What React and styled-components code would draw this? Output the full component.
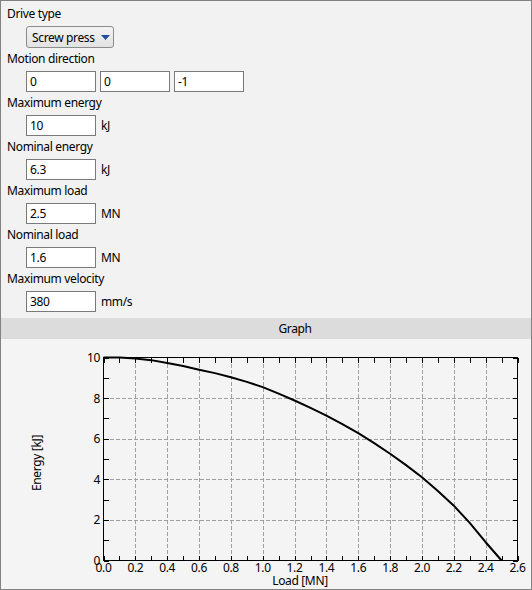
import styled, { createGlobalStyle } from "styled-components";

const GlobalStyle = createGlobalStyle`
  body {
    margin: 0;
    font-family: "Noto Sans", "Liberation Sans", sans-serif;
    font-size: 12px;
    letter-spacing: -0.35px;
    color: #000;
  }
`;

const Frame = styled.div`
  width: 532px;
  height: 590px;
  box-sizing: border-box;
  border: 1px solid #828282;
  background: #f2f2f2;
  display: flex;
  flex-direction: column;
  overflow: hidden;
`;

const Form = styled.div`
  display: flex;
  flex-direction: column;
  gap: 2px;
  padding: 4px 6px 6px;
`;

const Group = styled.div`
  display: flex;
  flex-direction: column;
`;

const Label = styled.div`
  height: 18px;
  line-height: 18px;
  margin-bottom: 3px;
  white-space: nowrap;
`;

const FieldRow = styled.div`
  display: flex;
  align-items: center;
  gap: 4px;
  padding-left: 19px;
  height: ${(p) => p.$h || 21}px;
`;

const Input = styled.input`
  box-sizing: border-box;
  width: 70px;
  height: 21px;
  margin: 0;
  padding: 0 3px;
  border: 1px solid #7a7a7a;
  background: #fff;
  font: inherit;
  letter-spacing: inherit;
  color: #000;
  outline: none;
`;

const Unit = styled.span`
  margin-left: 1px;
`;

const Dropdown = styled.button`
  box-sizing: border-box;
  height: 22px;
  margin: 0;
  padding: 0 3px 0 5px;
  display: flex;
  align-items: center;
  gap: 6px;
  white-space: nowrap;
  border: 1px solid #8c8c8c;
  border-radius: 3px;
  background: linear-gradient(#f3f3f3, #e2e2e2);
  font: inherit;
  letter-spacing: inherit;
  color: #000;
`;

const SectionHeader = styled.div`
  height: 21px;
  line-height: 21px;
  background: #dcdcdc;
  text-align: center;
  padding-left: 58px;
`;

const GraphArea = styled.div`
  flex: 1;
  background: #f4f4f4;
`;

const groups = [
  { label: "Maximum energy", value: "10", unit: "kJ" },
  { label: "Nominal energy", value: "6.3", unit: "kJ" },
  { label: "Maximum load", value: "2.5", unit: "MN" },
  { label: "Nominal load", value: "1.6", unit: "MN" },
  { label: "Maximum velocity", value: "380", unit: "mm/s" },
];

// plot box in svg coordinates
const L = 102.5;
const R = 516.5;
const T = 18.5;
const B = 221.5;
const sx = (f) => L + (f / 2.6) * (R - L);
const sy = (e) => B - (e / 10) * (B - T);

const curve = [
  [0, 10], [0.1, 10], [0.2, 9.95], [0.3, 9.87], [0.4, 9.73], [0.5, 9.58],
  [0.6, 9.4], [0.7, 9.23], [0.8, 9.03], [0.9, 8.8], [1.0, 8.54], [1.1, 8.22],
  [1.2, 7.88], [1.3, 7.52], [1.4, 7.14], [1.5, 6.72], [1.6, 6.27], [1.7, 5.78],
  [1.8, 5.26], [1.9, 4.7], [2.0, 4.1], [2.1, 3.42], [2.2, 2.7], [2.3, 1.85],
  [2.4, 0.9], [2.5, 0],
];

const range = (n) => Array.from({ length: n }, (_, i) => i);

function Chart() {
  const xt = range(27).map((i) => i / 10);
  const yt = range(11);
  return (
    <svg width="530" height="250" style={{ display: "block" }}>
      <g stroke="#a0a0a0" strokeDasharray="4 2" shapeRendering="crispEdges">
        {range(12).map((i) => {
          const x = Math.round(sx((i + 1) * 0.2)) + 0.5;
          return <line key={"gx" + i} x1={x} x2={x} y1={T} y2={B} />;
        })}
        {[2, 4, 6, 8].map((e) => {
          const y = Math.round(sy(e)) + 0.5;
          return <line key={"gy" + e} x1={L} x2={R} y1={y} y2={y} />;
        })}
      </g>
      <g stroke="#000" shapeRendering="crispEdges">
        {xt.map((f) => {
          const x = Math.round(sx(f)) + 0.5;
          return (
            <g key={"tx" + f}>
              <line x1={x} x2={x} y1={T} y2={T + 5} />
              <line x1={x} x2={x} y1={B} y2={B - 5} />
            </g>
          );
        })}
        {yt.map((e) => {
          const y = Math.round(sy(e)) + 0.5;
          return (
            <g key={"ty" + e}>
              <line x1={L} x2={L + 5} y1={y} y2={y} />
              <line x1={R} x2={R - 5} y1={y} y2={y} />
            </g>
          );
        })}
        <rect x={L} y={T} width={R - L} height={B - T} fill="none" />
      </g>
      <polyline
        points={curve.map(([f, e]) => `${sx(f)},${sy(e)}`).join(" ")}
        fill="none"
        stroke="#000"
        strokeWidth="2"
        strokeLinejoin="round"
      />
      <g fontSize="12" fill="#000" fontFamily="Noto Sans, Liberation Sans, sans-serif">
        {range(14).map((i) => (
          <text key={"lx" + i} x={sx(i * 0.2)} y={232.5} textAnchor="middle">
            {(i * 0.2).toFixed(1)}
          </text>
        ))}
        {[0, 2, 4, 6, 8, 10].map((e) => (
          <text key={"ly" + e} x={99} y={sy(e) + 4.5} textAnchor="end">
            {e}
          </text>
        ))}
        <text x={299} y={245.5} textAnchor="middle">
          Load [MN]
        </text>
        <text transform="translate(40,124) rotate(-90)" textAnchor="middle">
          Energy [kJ]
        </text>
      </g>
    </svg>
  );
}

export default function App() {
  return (
    <>
      <GlobalStyle />
      <Frame>
        <Form>
          <Group>
            <Label>Drive type</Label>
            <FieldRow $h={22}>
              <Dropdown type="button">
                <span>Screw press</span>
                <svg width="9" height="5" viewBox="0 0 9 5">
                  <path d="M0 0H9L4.5 5Z" fill="#1f4e9e" />
                </svg>
              </Dropdown>
            </FieldRow>
          </Group>
          <Group>
            <Label>Motion direction</Label>
            <FieldRow>
              <Input defaultValue="0" />
              <Input defaultValue="0" />
              <Input defaultValue="-1" />
            </FieldRow>
          </Group>
          {groups.map((g) => (
            <Group key={g.label}>
              <Label>{g.label}</Label>
              <FieldRow>
                <Input defaultValue={g.value} />
                <Unit>{g.unit}</Unit>
              </FieldRow>
            </Group>
          ))}
        </Form>
        <SectionHeader>Graph</SectionHeader>
        <GraphArea>
          <Chart />
        </GraphArea>
      </Frame>
    </>
  );
}
